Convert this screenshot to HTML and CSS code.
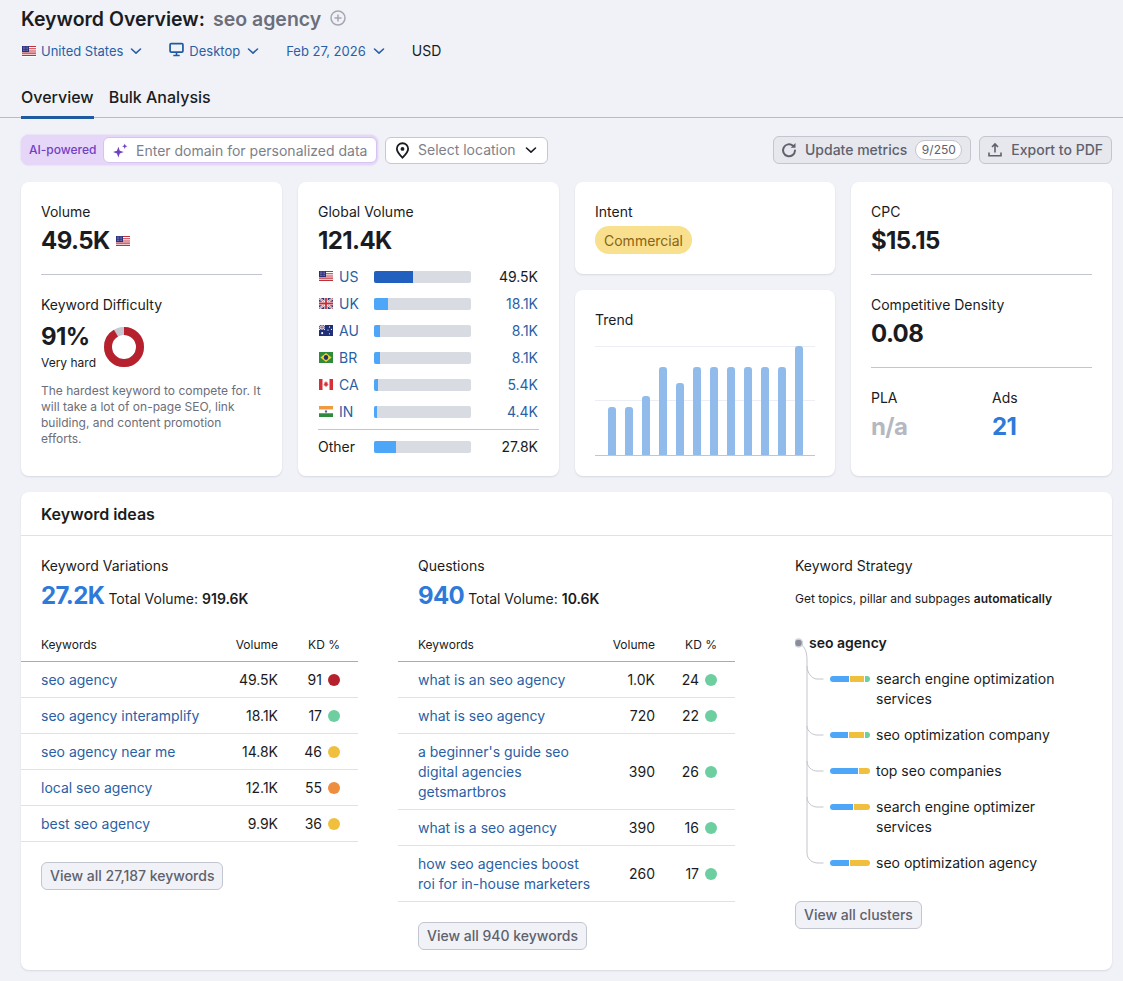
FILE: index.html
```html
<!DOCTYPE html>
<html lang="en">
<head>
<meta charset="utf-8">
<title>Keyword Overview: seo agency</title>
<link rel="stylesheet" href="styles.css">
</head>
<body>
<svg class="sprite" xmlns="http://www.w3.org/2000/svg">
  <symbol id="f-us" viewBox="0 0 14 10" preserveAspectRatio="none"><rect width="14" height="10" fill="#fff"/><path d="M0 .5h14M0 2.5h14M0 4.5h14M0 6.5h14M0 8.5h14" stroke="#c0303a" stroke-width="1"/><rect width="7" height="5.500" fill="#2c2f7c"/><path d="M1 1h5M1 2.500h5M1 4h5" stroke="#c9cbe6" stroke-width=".6" stroke-dasharray=".7 .7"/></symbol>
  <symbol id="f-uk" viewBox="0 0 14 10" preserveAspectRatio="none"><rect width="14" height="10" fill="#2c3a7c"/><path d="M0 0l14 10M14 0L0 10" stroke="#fff" stroke-width="2"/><path d="M0 0l14 10M14 0L0 10" stroke="#c0303a" stroke-width=".7"/><path d="M7 0v10M0 5h14" stroke="#fff" stroke-width="3.200"/><path d="M7 0v10M0 5h14" stroke="#c0303a" stroke-width="1.800"/></symbol>
  <symbol id="f-au" viewBox="0 0 14 10" preserveAspectRatio="none"><rect width="14" height="10" fill="#1f2f78"/><path d="M0 0l6 4.500M6 0L0 4.500" stroke="#fff" stroke-width=".9"/><path d="M3 0v4.500M0 2.200h6" stroke="#fff" stroke-width="1.300"/><path d="M3 0v4.500M0 2.200h6" stroke="#c0303a" stroke-width=".6"/><g fill="#fff"><circle cx="3.200" cy="7.400" r="1"/><circle cx="10.500" cy="1.800" r=".6"/><circle cx="12.400" cy="4" r=".6"/><circle cx="9" cy="4.600" r=".6"/><circle cx="10.500" cy="8" r=".6"/></g></symbol>
  <symbol id="f-br" viewBox="0 0 14 10" preserveAspectRatio="none"><rect width="14" height="10" fill="#2f8a3c"/><path d="M7 1l5.600 4L7 9 1.400 5z" fill="#e8d23a"/><circle cx="7" cy="5" r="2.200" fill="#26306e"/></symbol>
  <symbol id="f-ca" viewBox="0 0 14 10" preserveAspectRatio="none"><rect width="14" height="10" fill="#fff"/><rect width="3.500" height="10" fill="#d5303a"/><rect x="10.500" width="3.500" height="10" fill="#d5303a"/><path d="M7 1.800l.8 1.500 1-.4-.4 2 1-.3-.4 1.200-1.500.3.1 1H6.400l.1-1L5 5.800l-.4-1.200 1 .3-.4-2 1 .4z" fill="#d5303a"/></symbol>
  <symbol id="f-in" viewBox="0 0 14 10" preserveAspectRatio="none"><rect width="14" height="3.400" fill="#ef9a3c"/><rect y="3.300" width="14" height="3.400" fill="#fff"/><rect y="6.600" width="14" height="3.400" fill="#2f8a3c"/><circle cx="7" cy="5" r="1.100" fill="#5a5f9a"/></symbol>
  <symbol id="chev" viewBox="0 0 12 12"><path d="M1.500 4 6 8.200 10.500 4" fill="none" stroke="currentColor" stroke-width="1.600" stroke-linecap="round" stroke-linejoin="round"/></symbol>
</svg>

<header class="page-head">
  <h1 class="title"><span>Keyword Overview:</span> <span class="title-kw">seo agency</span>
    <svg class="plus" viewBox="0 0 16 16"><circle cx="8" cy="8" r="7" fill="none" stroke="#a4a7b2" stroke-width="1.500"/><path d="M8 4.500v7M4.500 8h7" stroke="#a4a7b2" stroke-width="1.500"/></svg>
  </h1>
  <div class="filters">
    <span class="filter"><svg class="flag"><use href="#f-us"/></svg>United States<svg class="chev"><use href="#chev"/></svg></span>
    <span class="filter"><svg class="mon" viewBox="0 0 14 14"><rect x="1" y="1.500" width="12" height="8" rx="1" fill="none" stroke="#1f5aa0" stroke-width="1.600"/><path d="M7 10v2M4 12.600h6" stroke="#1f5aa0" stroke-width="1.500"/></svg>Desktop<svg class="chev"><use href="#chev"/></svg></span>
    <span class="filter"><span>Feb 27, 2026</span><svg class="chev"><use href="#chev"/></svg></span>
    <span class="currency">USD</span>
  </div>
  <nav class="tabs">
    <span class="tab tab-on">Overview</span>
    <span class="tab">Bulk Analysis</span>
  </nav>
</header>

<section class="toolbar">
  <div class="ai">
    <span class="ai-label">AI-powered</span>
    <div class="ai-input">
      <svg class="spark" viewBox="0 0 16 16"><path d="M6 4.500l1.300 3.700L11 9.500l-3.700 1.300L6 14.500l-1.300-3.700L1 9.500l3.700-1.300z" fill="#6f3fc4"/><path d="M12 1.500l.7 1.800 1.800.7-1.800.7-.7 1.800-.7-1.800-1.800-.7 1.800-.7z" fill="#6f3fc4"/></svg>
      <span class="ai-text">Enter domain for personalized data</span>
    </div>
  </div>
  <div class="loc">
    <svg class="pin" viewBox="0 0 16 16"><path d="M8 1.200c-3 0-5.300 2.300-5.300 5.200 0 3.400 3.500 6.500 5.300 8.300 1.800-1.800 5.300-4.900 5.300-8.300 0-2.900-2.300-5.200-5.300-5.200z" fill="none" stroke="#1a1c22" stroke-width="1.700"/><circle cx="8" cy="6.500" r="1.800" fill="#1a1c22"/></svg>
    <span class="loc-text">Select location</span>
    <svg class="chev chev-dark"><use href="#chev"/></svg>
  </div>
  <div class="actions">
    <span class="btn"><svg class="btn-ic" viewBox="0 0 16 16"><path d="M14 8.500A6 6 0 1 1 12 3.800" fill="none" stroke="#5f616c" stroke-width="2" stroke-linecap="round"/><path d="M14.500 1v4.800H9.700z" fill="#5f616c"/></svg>Update metrics<span class="count">9/250</span></span>
    <span class="btn"><svg class="btn-ic" viewBox="0 0 16 16"><path d="M8 10.500V2.500M5 5l3-3 3 3" fill="none" stroke="#5f616c" stroke-width="1.600"/><path d="M2 10.500v3.300h12v-3.300" fill="none" stroke="#5f616c" stroke-width="1.600"/></svg>Export to PDF</span>
  </div>
</section>

<section class="cards">
  <article class="card">
    <div class="label">Volume</div>
    <div class="big">49.5K <svg class="flag flag-big"><use href="#f-us"/></svg></div>
    <hr class="rule">
    <div class="label">Keyword Difficulty</div>
    <div class="kd-row">
      <div class="kd-text">
        <div class="big">91%</div>
        <div class="kd-sub">Very hard</div>
      </div>
      <svg class="donut" viewBox="0 0 40 40"><circle cx="20" cy="20" r="16" fill="none" stroke="#c6c8d1" stroke-width="8"/><circle cx="20" cy="20" r="16" fill="none" stroke="#b7212e" stroke-width="8" stroke-dasharray="91.500 100.500" transform="rotate(-90 20 20)"/></svg>
    </div>
    <p class="desc">The hardest keyword to compete for. It will take a lot of on-page SEO, link building, and content promotion efforts.</p>
  </article>

  <article class="card">
    <div class="label">Global Volume</div>
    <div class="big">121.4K</div>
    <div class="geo">
      <div class="geo-row"><svg class="flag"><use href="#f-us"/></svg><span class="geo-c">US</span><span class="track"><i class="fill fill-dark" style="width:39px"></i></span><span class="geo-v">49.5K</span></div>
      <div class="geo-row"><svg class="flag"><use href="#f-uk"/></svg><span class="geo-c">UK</span><span class="track"><i class="fill" style="width:14px"></i></span><span class="geo-v geo-link">18.1K</span></div>
      <div class="geo-row"><svg class="flag"><use href="#f-au"/></svg><span class="geo-c">AU</span><span class="track"><i class="fill" style="width:6px"></i></span><span class="geo-v geo-link">8.1K</span></div>
      <div class="geo-row"><svg class="flag"><use href="#f-br"/></svg><span class="geo-c">BR</span><span class="track"><i class="fill" style="width:6px"></i></span><span class="geo-v geo-link">8.1K</span></div>
      <div class="geo-row"><svg class="flag"><use href="#f-ca"/></svg><span class="geo-c">CA</span><span class="track"><i class="fill" style="width:4px"></i></span><span class="geo-v geo-link">5.4K</span></div>
      <div class="geo-row"><svg class="flag"><use href="#f-in"/></svg><span class="geo-c">IN</span><span class="track"><i class="fill" style="width:3px"></i></span><span class="geo-v geo-link">4.4K</span></div>
      <div class="geo-row geo-other"><span class="geo-o">Other</span><span class="track"><i class="fill" style="width:22px"></i></span><span class="geo-v">27.8K</span></div>
    </div>
  </article>

  <div class="stack">
    <article class="card card-intent">
      <div class="label">Intent</div>
      <span class="intent">Commercial</span>
    </article>
    <article class="card card-trend">
      <div class="label">Trend</div>
      <div class="chart">
        <i class="grid-line grid-top"></i><i class="grid-line grid-mid"></i>
        <i class="bar" style="height:48px"></i><i class="bar" style="height:48px"></i><i class="bar" style="height:59px"></i><i class="bar" style="height:88px"></i><i class="bar" style="height:72px"></i><i class="bar" style="height:88px"></i><i class="bar" style="height:88px"></i><i class="bar" style="height:88px"></i><i class="bar" style="height:88px"></i><i class="bar" style="height:88px"></i><i class="bar" style="height:88px"></i><i class="bar" style="height:109px"></i>
      </div>
    </article>
  </div>

  <article class="card">
    <div class="label">CPC</div>
    <div class="big">$15.15</div>
    <hr class="rule">
    <div class="label">Competitive Density</div>
    <div class="big">0.08</div>
    <hr class="rule">
    <div class="pair">
      <div><div class="label">PLA</div><div class="big big-na">n/a</div></div>
      <div><div class="label">Ads</div><div class="big big-blue">21</div></div>
    </div>
  </article>
</section>

<section class="ideas">
  <h2 class="ideas-head">Keyword ideas</h2>
  <div class="ideas-cols">
    <div class="col">
      <div class="col-title">Keyword Variations</div>
      <div class="col-stat"><span class="stat">27.2K</span> Total Volume: <b>919.6K</b></div>
      <div class="row row-head"><span class="kw">Keywords</span><span class="vol">Volume</span><span class="kd">KD %</span></div>
      <div class="row"><a class="kw">seo agency</a><span class="vol">49.5K</span><span class="kd">91<i class="dot d-red"></i></span></div>
      <div class="row"><a class="kw">seo agency interamplify</a><span class="vol">18.1K</span><span class="kd">17<i class="dot d-green"></i></span></div>
      <div class="row"><a class="kw">seo agency near me</a><span class="vol">14.8K</span><span class="kd">46<i class="dot d-yellow"></i></span></div>
      <div class="row"><a class="kw">local seo agency</a><span class="vol">12.1K</span><span class="kd">55<i class="dot d-orange"></i></span></div>
      <div class="row"><a class="kw">best seo agency</a><span class="vol">9.9K</span><span class="kd">36<i class="dot d-yellow"></i></span></div>
      <span class="view">View all 27,187 keywords</span>
    </div>

    <div class="col">
      <div class="col-title">Questions</div>
      <div class="col-stat"><span class="stat">940</span> Total Volume: <b>10.6K</b></div>
      <div class="row row-head"><span class="kw">Keywords</span><span class="vol">Volume</span><span class="kd">KD %</span></div>
      <div class="row"><a class="kw">what is an seo agency</a><span class="vol">1.0K</span><span class="kd">24<i class="dot d-green"></i></span></div>
      <div class="row"><a class="kw">what is seo agency</a><span class="vol">720</span><span class="kd">22<i class="dot d-green"></i></span></div>
      <div class="row"><a class="kw">a beginner's guide seo digital agencies getsmartbros</a><span class="vol">390</span><span class="kd">26<i class="dot d-green"></i></span></div>
      <div class="row"><a class="kw">what is a seo agency</a><span class="vol">390</span><span class="kd">16<i class="dot d-green"></i></span></div>
      <div class="row"><a class="kw">how seo agencies boost roi for in-house marketers</a><span class="vol">260</span><span class="kd">17<i class="dot d-green"></i></span></div>
      <span class="view">View all 940 keywords</span>
    </div>

    <div class="col">
      <div class="col-title">Keyword Strategy</div>
      <p class="col-note">Get topics, pillar and subpages <b>automatically</b></p>
      <div class="tree">
        <svg class="tree-lines" viewBox="0 0 40 240" width="40" height="240"><g fill="none" stroke="#c3c5cd" stroke-width="1"><path d="M3.500 10C8 12 12 16 12 27V220C12 226 17 230 23 230H28.500"/><path d="M12 33C12 40 17 46 22 46H28.500"/><path d="M12 93C12 98 17 102 22 102H28.500"/><path d="M12 128C12 134 17 138 22 138H28.500"/><path d="M12 164C12 170 17 174 22 174H28.500"/></g><circle cx="3.500" cy="10" r="4" fill="#8b8d9c" stroke="#d3d4db" stroke-width="1.500"/></svg>
        <div class="tree-root">seo agency</div>
        <div class="cluster"><span class="mini"><i class="m-b" style="width:19px"></i><i class="m-y" style="width:14px"></i><i class="m-g" style="width:5px"></i></span><span class="cluster-t">search engine optimization services</span></div>
        <div class="cluster"><span class="mini"><i class="m-b" style="width:18px"></i><i class="m-y" style="width:15px"></i><i class="m-g" style="width:5px"></i></span><span class="cluster-t">seo optimization company</span></div>
        <div class="cluster"><span class="mini"><i class="m-b" style="width:28px"></i><i class="m-y" style="width:11px"></i></span><span class="cluster-t">top seo companies</span></div>
        <div class="cluster"><span class="mini"><i class="m-b" style="width:23px"></i><i class="m-y" style="width:16px"></i></span><span class="cluster-t">search engine optimizer services</span></div>
        <div class="cluster"><span class="mini"><i class="m-b" style="width:19px"></i><i class="m-y" style="width:20px"></i></span><span class="cluster-t">seo optimization agency</span></div>
      </div>
      <span class="view view-tree">View all clusters</span>
    </div>
  </div>
</section>
</body>
</html>
```

FILE: styles.css
```css
* { box-sizing: border-box; }
html, body { margin: 0; }
body {
  background: #f0f2f7;
  color: #1a1c22;
  font-family: Inter, "Liberation Sans", sans-serif;
  font-size: 14px;
  line-height: 20px;
  height: 981px;
  overflow: hidden;
}
.sprite { display: none; }

.page-head { border-bottom: 1px solid #b9bcc8; padding: 6px 0 0 21px; height: 118px; }
.title { margin: 0; font-size: 19.5px; line-height: 26px; font-weight: 600; display: flex; align-items: center; gap: 8px; }
.title-kw { color: #6c6e79; font-weight: 600; }
.plus { width: 16px; height: 16px; margin: -3px 0 0 1px; }
.filters { display: flex; align-items: center; margin-top: 9px; height: 20px; padding-left: 1px; }
.filter { display: inline-flex; align-items: center; color: #2a5fa5; margin-right: 27px; font-size: 13px; }
.filter .flag { margin-right: 5px; }
.flag { width: 14px; height: 11px; flex: none; }
.chev { width: 12px; height: 12px; margin-left: 7px; color: #2a5fa5; }
.chev-dark { color: #1a1c22; margin-left: 0; }
.mon { width: 15px; height: 15px; margin-right: 5px; margin-top: -3px; }
.tabs { display: flex; gap: 15px; margin-top: 25px; }
.tab { font-size: 16px; line-height: 22px; height: 33px; font-weight: 500; }
.tab-on { border-bottom: 3px solid #1f5aa0; }

.toolbar { display: flex; align-items: center; padding: 17px 11px 0 21px; }
.ai { display: flex; align-items: center; width: 357px; height: 30px; background: #e6d6f8; border-radius: 8px; padding: 2px 1px 2px 8px; box-shadow: 0 0 2px #d8c4f2; }
.ai-label { color: #6f3fc4; font-size: 12px; font-weight: 500; width: 74px; flex: none; }
.ai-input { flex: 1; height: 26px; background: #fff; border-radius: 6px; border: 1px solid #d6c3f0; display: flex; align-items: center; padding-left: 8px; color: #7d7f8a; gap: 7px; }
.ai-text { padding-top: 2px; }
.spark { width: 17px; height: 17px; flex: none; }
.loc { margin-left: 7px; width: 163px; height: 27px; background: #fff; border: 1px solid #c6c8d1; border-radius: 6px; display: flex; align-items: center; padding: 0 10px 0 8px; color: #7d7f8a; }
.pin { width: 17px; height: 17px; margin-right: 7px; flex: none; }
.loc-text { flex: 1; }
.actions { margin-left: auto; display: flex; gap: 8px; }
.btn { height: 28px; display: inline-flex; align-items: center; background: #e6e8ee; border: 1px solid #c3c5cf; border-radius: 6px; padding: 0 8px 0 7px; color: #5f616c; font-weight: 500; }
.btn-ic { width: 16px; height: 16px; margin-right: 8px; }
.count { width: 47px; text-align: center; background: #fff; border: 1px solid #c3c5cf; border-radius: 10px; height: 20px; font-size: 12px; line-height: 18px; margin-left: 8px; font-weight: 400; }

.cards { display: grid; grid-template-columns: 261px 261px 260px 261px; grid-template-rows: 294px; gap: 16px; margin: 17px 11px 0 21px; height: 294px; }
.card { background: #fff; border-radius: 8px; padding: 20px; box-shadow: 0 1px 2px rgba(30, 35, 60, .12); }
.label { line-height: 20px; }
.big { font-size: 24px; line-height: 34px; font-weight: 700; margin-top: 2px; display: flex; align-items: center; gap: 6px; letter-spacing: -.6px; }
.flag-big { margin-top: 1px; }
.rule { border: 0; border-top: 1px solid #c3c5cd; margin: 16px 0 20px; }
.kd-row { display: flex; align-items: flex-start; gap: 8px; margin-top: 3px; }
.kd-sub { font-size: 12px; line-height: 16px; margin-top: 1px; }
.donut { width: 40px; height: 40px; margin-top: 9px; }
.desc { margin: 12px 0 0; font-size: 12px; line-height: 16px; color: #6c6e79; }

.geo { margin-top: 5px; }
.geo-row { display: flex; align-items: center; height: 27px; }
.geo-row .flag { margin: 0 6px 0 1px; }
.geo-c { width: 35px; color: #2a5fa5; }
.geo-o { width: 56px; }
.track { width: 97px; height: 12px; background: #d9dbe2; border-radius: 2px; overflow: hidden; display: block; }
.fill { display: block; height: 12px; background: #4da6f7; }
.fill-dark { background: #2160bf; }
.geo-v { margin-left: auto; padding-right: 1px; }
.geo-link { color: #2a5fa5; }
.geo-other { border-top: 1px solid #c3c5cd; height: 35px; margin-top: 4px; }

.stack { display: flex; flex-direction: column; gap: 16px; }
.card-intent { height: 92px; }
.card-trend { flex: 1; padding-top: 20px; }
.intent { display: inline-block; height: 28px; line-height: 28px; padding: 1px 9px 0; margin-top: 4px; background: #f8e08e; border-radius: 14px; color: #8a6414; }
.chart { position: relative; display: flex; align-items: flex-end; gap: 9px; height: 110px; margin-top: 16px; padding-left: 13px; border-bottom: 1px solid #c3c5cd; }
.grid-line { position: absolute; left: 0; right: 0; border-top: 1px solid #eceef3; }
.grid-top { top: 0; }
.grid-mid { top: 54px; }
.bar { position: relative; width: 8px; background: #90bbeb; border-radius: 3px 3px 0 0; }
.pair { display: grid; grid-template-columns: 121px 1fr; }
.big-na { color: #b5b8c1; }
.big-blue { color: #2f7ad9; }

.ideas { margin: 16px 11px 0 21px; height: 478px; background: #fff; border-radius: 8px; box-shadow: 0 1px 2px rgba(30, 35, 60, .12); }
.ideas-head { margin: 0; height: 44px; padding: 11px 20px 0; font-size: 16px; line-height: 22px; font-weight: 600; border-bottom: 1px solid #dfe1e7; }
.ideas-cols { display: grid; grid-template-columns: repeat(3, 337px); gap: 40px; padding-top: 20px; }
.col-title { padding-left: 20px; }
.col-stat { padding-left: 20px; margin-top: 2px; height: 36px; line-height: 36px; }
.col-stat b { font-weight: 600; }
.stat { font-size: 24px; font-weight: 700; color: #2f7ad9; letter-spacing: -.6px; }
.col-note { margin: 15px 0 0 20px; font-size: 12px; line-height: 16px; }
.col-note b { font-weight: 600; }
.row { display: flex; align-items: center; padding: 8px 18px 7px 20px; border-bottom: 1px solid #dfe1e7; }
.row-head { margin-top: 15px; font-size: 12px; height: 33px; padding-top: 6px; border-bottom-color: #a9abb5; }
.kw { flex: 1; color: #2a5fa5; }
.row-head .kw { color: #1a1c22; }
.vol { width: 60px; text-align: right; flex: none; }
.kd { width: 62px; flex: none; display: flex; justify-content: flex-end; align-items: center; gap: 6px; }
.dot { width: 12px; height: 12px; border-radius: 50%; }
.d-red { background: #b7212e; }
.d-green { background: #6dcf9f; }
.d-yellow { background: #f0bf3e; }
.d-orange { background: #ee8d3e; }
.view { display: inline-block; margin: 20px 0 0 20px; height: 28px; line-height: 26px; padding: 0 8px; background: #f0f2f7; border: 1px solid #c3c5cf; border-radius: 6px; color: #5f616c; font-weight: 500; }

.tree { position: relative; margin: 26px 0 0 20px; }
.tree-lines { position: absolute; left: -0.5px; top: 0; }
.tree-root { padding-left: 14px; font-weight: 600; height: 36px; }
.cluster { display: flex; align-items: flex-start; padding-left: 35px; margin-bottom: 16px; }
.cluster:last-child { margin-bottom: 0; }
.mini { display: flex; gap: 1px; width: 40px; height: 6px; margin-top: 7px; margin-right: 6px; border-radius: 3px; overflow: hidden; flex: none; }
.mini i { display: block; }
.m-b { background: #4da6f7; }
.m-y { background: #f0bf3e; }
.m-g { background: #6dcf9f; }
.cluster-t { flex: 1; padding-right: 40px; }
.view-tree { margin-top: 28px; }
```
